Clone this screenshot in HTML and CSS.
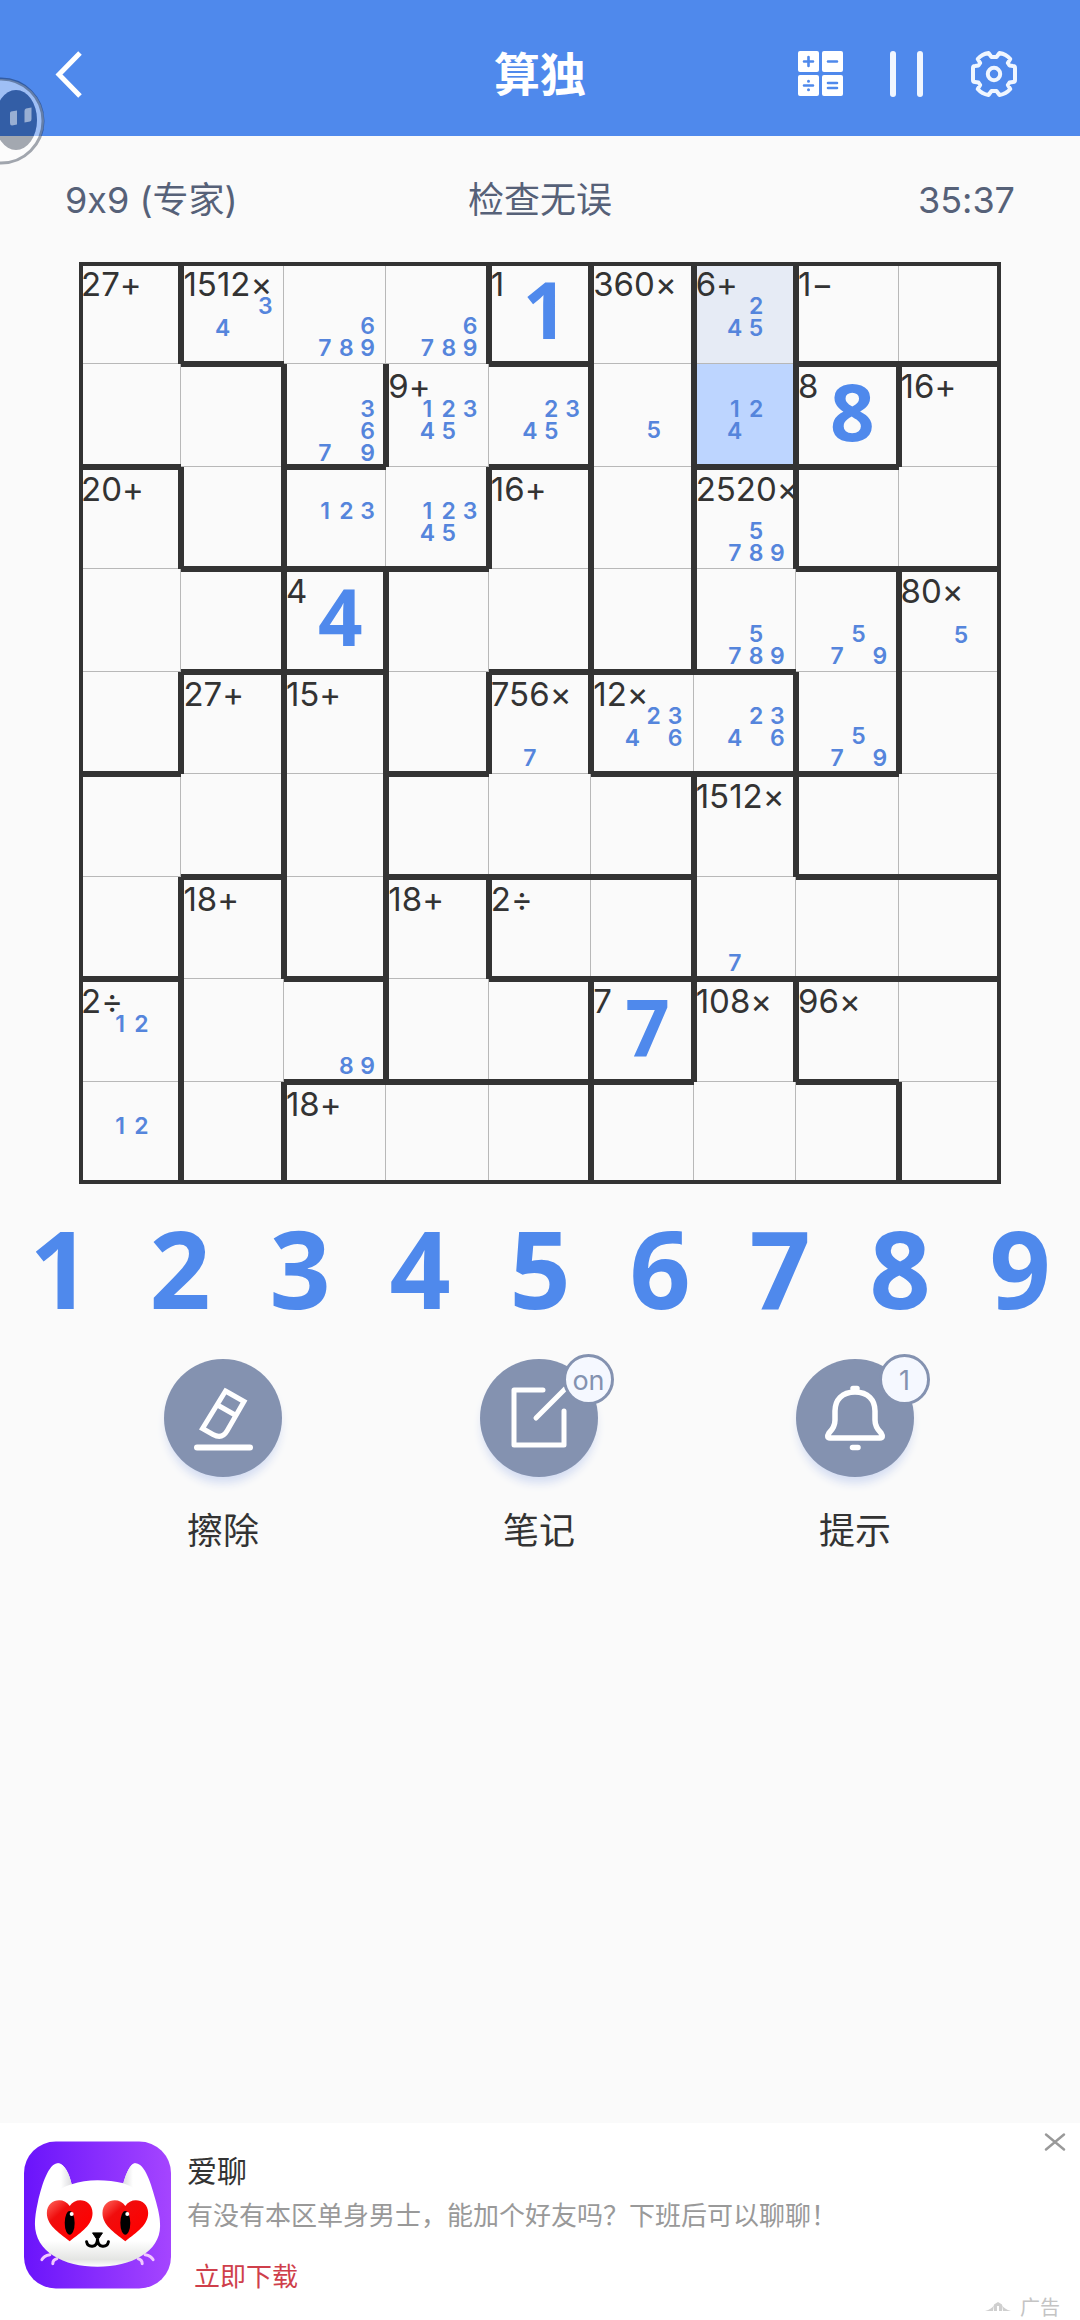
FILE: index.html
```html
<!DOCTYPE html>
<html lang="zh-CN">
<head>
<meta charset="utf-8">
<meta name="viewport" content="width=device-width, initial-scale=1">
<title>算独</title>
<link rel="stylesheet" href="styles.css">
</head>
<body>
<header class="topbar">
  <button class="icon-btn back" type="button" aria-label="返回">
    <svg width="48" height="48" viewBox="0 0 48 48" fill="none" stroke="#fff" stroke-width="5"><path d="M34 3 13 24.500 34 46"/></svg>
  </button>
  <h1 class="title">算独</h1>
  <div class="actions">
    <button class="icon-btn" type="button" aria-label="计算器">
      <svg width="46" height="46" viewBox="0 0 46 46"><g fill="#fff"><rect x="0" y="0" width="21" height="21" rx="2"/><rect x="24" y="0" width="21" height="21" rx="2"/><rect x="0" y="24" width="21" height="21" rx="2"/><rect x="24" y="24" width="21" height="21" rx="2"/></g><g stroke="#4f89ec" stroke-width="2.600" stroke-linecap="round"><path d="M6 10.500h9M10.500 6v9M30 10.500h9M6 34.500h9M30 32h9M30 37h9"/><path d="M10.500 30.200v.1M10.500 38.700v.1" stroke-width="3"/></g></svg>
    </button>
    <button class="icon-btn" type="button" aria-label="暂停">
      <svg width="34" height="46" viewBox="0 0 34 46" fill="#f0f6ff"><rect x="0" y="0" width="6" height="46" rx="3"/><rect x="27" y="0" width="6" height="46" rx="3"/></svg>
    </button>
    <button class="icon-btn" type="button" aria-label="设置">
      <svg width="48" height="48" viewBox="-24 -24 48 48" fill="none" stroke="#f0f6ff" stroke-width="4" stroke-linejoin="round"><path d="M19 -8Q21 -8 21 -6V6Q21 8 19 8L15.500 8.500 13.800 11 16.300 15Q12 20 5.500 21L2.500 17H-2.500L-5.500 21Q-12 20 -16.300 15L-13.800 11 -15.500 8.500 -19 8Q-21 8 -21 6V-6Q-21 -8 -19 -8L-15.500 -8.500 -13.800 -11 -16.300 -15Q-12 -20 -5.500 -21L-2.500 -17H2.500L5.500 -21Q12 -20 16.300 -15L13.800 -11 15.500 -8.500Z"/><circle r="6.200"/></svg>
    </button>
  </div>
</header>

<div class="assist" aria-hidden="true">
  <svg width="46" height="90" viewBox="0 0 46 90"><path fill="#fff" fill-opacity=".46" fill-rule="evenodd" d="M2 3a42 42 0 0 1 0 84H-10V3ZM16 14a21 30 0 0 0 0 60a21 30 0 0 0 0-60Z"/><ellipse cx="16" cy="44" rx="21" ry="30" fill="#000e25" fill-opacity=".35"/><circle cx="1" cy="45" r="42" fill="none" stroke="#000e25" stroke-opacity=".36" stroke-width="3"/><path fill="#fff" fill-opacity=".5" d="M11 35.500Q10 36 10 37V47Q10 49.500 12 49.500L17 48.500V34.500ZM26 32.500Q24.500 33 24.500 35V46.500L30 45.500Q31.500 45 31.500 43V31.500Z"/></svg>
</div>

<main class="game">
  <div class="status">
    <span>9x9 (专家)</span>
    <span>检查无误</span>
    <time class="clock">35:37</time>
  </div>

  <div class="board">
    <button class="cell r"><span class="clue">27+</span></button>
    <button class="cell b"><span class="clue">1512×</span><span class="notes"><i class="n3">3</i><i class="n4">4</i></span></button>
    <button class="cell"><span class="notes"><i class="n6">6</i><i class="n7">7</i><i class="n8">8</i><i class="n9">9</i></span></button>
    <button class="cell r"><span class="notes"><i class="n6">6</i><i class="n7">7</i><i class="n8">8</i><i class="n9">9</i></span></button>
    <button class="cell r b"><span class="clue">1</span><span class="value">1</span></button>
    <button class="cell r"><span class="clue">360×</span></button>
    <button class="cell r same-cage"><span class="clue">6+</span><span class="notes"><i class="n2">2</i><i class="n4">4</i><i class="n5">5</i></span></button>
    <button class="cell b"><span class="clue">1−</span></button>
    <button class="cell b"></button>

    <button class="cell b"></button>
    <button class="cell r"></button>
    <button class="cell r b"><span class="notes"><i class="n3">3</i><i class="n6">6</i><i class="n7">7</i><i class="n9">9</i></span></button>
    <button class="cell"><span class="clue">9+</span><span class="notes"><i class="n1">1</i><i class="n2">2</i><i class="n3">3</i><i class="n4">4</i><i class="n5">5</i></span></button>
    <button class="cell r b"><span class="notes"><i class="n2">2</i><i class="n3">3</i><i class="n4">4</i><i class="n5">5</i></span></button>
    <button class="cell r"><span class="notes"><i class="n5">5</i></span></button>
    <button class="cell r b selected"><span class="notes"><i class="n1">1</i><i class="n2">2</i><i class="n4">4</i></span></button>
    <button class="cell r b"><span class="clue">8</span><span class="value">8</span></button>
    <button class="cell"><span class="clue">16+</span></button>

    <button class="cell r"><span class="clue">20+</span></button>
    <button class="cell r b"></button>
    <button class="cell b"><span class="notes"><i class="n1">1</i><i class="n2">2</i><i class="n3">3</i></span></button>
    <button class="cell r b"><span class="notes"><i class="n1">1</i><i class="n2">2</i><i class="n3">3</i><i class="n4">4</i><i class="n5">5</i></span></button>
    <button class="cell r"><span class="clue">16+</span></button>
    <button class="cell r"></button>
    <button class="cell r"><span class="clue">2520×</span><span class="notes"><i class="n5">5</i><i class="n7">7</i><i class="n8">8</i><i class="n9">9</i></span></button>
    <button class="cell b"></button>
    <button class="cell b"></button>

    <button class="cell"></button>
    <button class="cell r b"></button>
    <button class="cell r b"><span class="clue">4</span><span class="value">4</span></button>
    <button class="cell"></button>
    <button class="cell r b"></button>
    <button class="cell r b"></button>
    <button class="cell b"><span class="notes"><i class="n5">5</i><i class="n7">7</i><i class="n8">8</i><i class="n9">9</i></span></button>
    <button class="cell r"><span class="notes"><i class="n5">5</i><i class="n7">7</i><i class="n9">9</i></span></button>
    <button class="cell"><span class="clue">80×</span><span class="notes"><i class="n5">5</i></span></button>

    <button class="cell r b"></button>
    <button class="cell r"><span class="clue">27+</span></button>
    <button class="cell r"><span class="clue">15+</span></button>
    <button class="cell r b"></button>
    <button class="cell r"><span class="clue">756×</span><span class="notes"><i class="n7">7</i></span></button>
    <button class="cell b"><span class="clue">12×</span><span class="notes"><i class="n2">2</i><i class="n3">3</i><i class="n4">4</i><i class="n6">6</i></span></button>
    <button class="cell r b"><span class="notes"><i class="n2">2</i><i class="n3">3</i><i class="n4">4</i><i class="n6">6</i></span></button>
    <button class="cell r b"><span class="notes"><i class="n5">5</i><i class="n7">7</i><i class="n9">9</i></span></button>
    <button class="cell"></button>

    <button class="cell"></button>
    <button class="cell r b"></button>
    <button class="cell r"></button>
    <button class="cell b"></button>
    <button class="cell b"></button>
    <button class="cell r b"></button>
    <button class="cell r"><span class="clue">1512×</span></button>
    <button class="cell b"></button>
    <button class="cell b"></button>

    <button class="cell r b"></button>
    <button class="cell r"><span class="clue">18+</span></button>
    <button class="cell r b"></button>
    <button class="cell r"><span class="clue">18+</span></button>
    <button class="cell b"><span class="clue">2÷</span></button>
    <button class="cell r b"></button>
    <button class="cell b"><span class="notes"><i class="n7">7</i></span></button>
    <button class="cell b"></button>
    <button class="cell b"></button>

    <button class="cell r"><span class="clue">2÷</span><span class="notes"><i class="n1">1</i><i class="n2">2</i></span></button>
    <button class="cell"></button>
    <button class="cell r b"><span class="notes"><i class="n8">8</i><i class="n9">9</i></span></button>
    <button class="cell b"></button>
    <button class="cell r b"></button>
    <button class="cell r b"><span class="clue">7</span><span class="value">7</span></button>
    <button class="cell r"><span class="clue">108×</span></button>
    <button class="cell b"><span class="clue">96×</span></button>
    <button class="cell"></button>

    <button class="cell r"><span class="notes"><i class="n1">1</i><i class="n2">2</i></span></button>
    <button class="cell r"></button>
    <button class="cell"><span class="clue">18+</span></button>
    <button class="cell"></button>
    <button class="cell r"></button>
    <button class="cell"></button>
    <button class="cell"></button>
    <button class="cell r"></button>
    <button class="cell"></button>
  </div>

  <div class="keypad">
    <button type="button">1</button>
    <button type="button">2</button>
    <button type="button">3</button>
    <button type="button">4</button>
    <button type="button">5</button>
    <button type="button">6</button>
    <button type="button">7</button>
    <button type="button">8</button>
    <button type="button">9</button>
  </div>

  <div class="tools">
    <button class="tool" type="button">
      <span class="disc">
        <svg width="118" height="118" viewBox="0 0 118 118" fill="none" stroke="#fff" stroke-width="5"><path d="M61.500 32 80 42.500 63 72Q58 80.500 49 75.500L38.500 69.500ZM53.500 46 72 56.500"/><path d="M33 88.500H86" stroke-width="6" stroke-linecap="round"/></svg>
      </span>
      <span class="label">擦除</span>
    </button>
    <button class="tool" type="button">
      <span class="disc">
        <svg width="118" height="118" viewBox="0 0 118 118" fill="none" stroke="#fff" stroke-width="5" stroke-linecap="round" stroke-linejoin="round"><path d="M63 31H34V86H84V52M56 59 86 29"/></svg>
        <span class="badge">on</span>
      </span>
      <span class="label">笔记</span>
    </button>
    <button class="tool" type="button">
      <span class="disc">
        <svg width="118" height="118" viewBox="0 0 118 118" fill="none" stroke="#fff" stroke-width="5.500" stroke-linecap="round" stroke-linejoin="round"><path d="M59 33C46 33 39 41 39 52V61C39 67 36 71 33 74Q30 79 34 79H84Q88 79 85 74C82 71 79 67 79 61V52C79 41 72 33 59 33Z"/><path d="M57 29.500H61M56.500 88.500H62"/></svg>
        <span class="badge">1</span>
      </span>
      <span class="label">提示</span>
    </button>
  </div>
</main>

<aside class="ad">
  <svg class="ad-logo" width="147" height="148" viewBox="0 0 148 148" aria-hidden="true">
    <defs>
      <linearGradient id="purple"><stop offset="0" stop-color="#6a14fb"/><stop offset="1" stop-color="#a545ff"/></linearGradient>
      <linearGradient id="fur" x2="0" y2="1"><stop offset=".75" stop-color="#fff"/><stop offset=".93" stop-color="#e4e5e3"/><stop offset="1" stop-color="#fff"/></linearGradient>
      <linearGradient id="earL"><stop offset=".4" stop-color="#fff"/><stop offset="1" stop-color="#dcdcdf"/></linearGradient>
      <linearGradient id="earR"><stop offset="0" stop-color="#dcdcdf"/><stop offset=".6" stop-color="#fff"/></linearGradient>
      <linearGradient id="heart" x2="1" y2="1"><stop offset="0" stop-color="#ff6a60"/><stop offset=".3" stop-color="#f00d0d"/><stop offset=".8" stop-color="#f00"/><stop offset="1" stop-color="#a80000"/></linearGradient>
      <path id="heart-shape" d="M0 41.500C-12 32-23 25-23 13C-23-1-6-4 0 6C6-4 23-1 23 13C23 25 12 32 0 41.500Z"/>
    </defs>
    <rect width="148" height="148" rx="32" fill="url(#purple)"/>
    <g stroke="#f1c8ff" stroke-width="3" fill="none" stroke-linecap="round"><path d="M18 119Q20 115 26 114M29 123Q29 119 33 118M130 119Q128 115 122 114M119 123Q119 119 115 118"/></g>
    <path fill="url(#fur)" d="M74 39Q88 39 100 42C103 32 107 22 112 22C122 22 128 43 133 61C136 72 137 78 137 85C137 111 108 126 74 126S11 111 11 83C11 77 12 70 14 61C18 43 25 22 34 22C41 22 46 34 48 43Q60 39 74 39Z"/>
    <path fill="url(#earL)" d="M34 22C41 22 46 34 48 43Q40 45 34 50Q26 40 34 22Z"/>
    <path fill="url(#earR)" d="M112 22C107 22 103 32 100 42Q106 44 112 48Q120 36 112 22Z"/>
    <use href="#heart-shape" x="46" y="59" fill="url(#heart)"/>
    <use href="#heart-shape" x="102" y="59" fill="url(#heart)"/>
    <ellipse cx="46" cy="82" rx="5" ry="12"/><ellipse cx="102" cy="82" rx="5" ry="12"/>
    <circle cx="48" cy="73" r="2" fill="#fff"/><circle cx="104" cy="73" r="2" fill="#fff"/>
    <path d="M69 92H79L75 98H73Z" stroke="#000" stroke-linejoin="round"/>
    <path d="M63 101Q64 106 69 105.500Q74 105 74 98Q74 105 79 105.500Q84 106 85 101" fill="none" stroke="#000" stroke-width="3" stroke-linecap="round"/>
  </svg>
  <div class="ad-copy">
    <strong class="ad-title">爱聊</strong>
    <p class="ad-text">有没有本区单身男士，能加个好友吗？下班后可以聊聊！</p>
    <a class="ad-link" href="#">立即下载</a>
  </div>
  <div class="ad-side">
    <button class="icon-btn" type="button" aria-label="关闭广告">
      <svg width="22" height="18" viewBox="0 0 22 18" stroke="#999" stroke-width="2.400" stroke-linecap="round"><path d="M2 1.500 20 16.500M20 1.500 2 16.500"/></svg>
    </button>
    <span class="ad-mark"><svg width="26" height="12" viewBox="0 0 26 12" fill="#cfcfcf" aria-hidden="true"><path d="M0 9Q7 7 9 3L8 9ZM9 2.500 13 0 17 2.500V9H14V4H12V9H9ZM17 3Q19 7 26 9H18Z"/></svg>广告</span>
  </div>
</aside>
</body>
</html>
```
FILE: styles.css
```css
* {
  box-sizing: border-box;
}

:root {
  --blue: #4f89ec;
  --ink: #333;
  --slate: #8492b0;
  --digits: "Noto Sans", "Open Sans", sans-serif;
}

body {
  margin: 0;
  min-height: 100vh;
  display: flex;
  flex-direction: column;
  background: #fafafa;
  color: var(--ink);
  font-family: Inter, "Noto Sans CJK SC", sans-serif;
  font-feature-settings: "calt" 0;
}

button {
  margin: 0;
  padding: 0;
  border: 0;
  background: none;
  color: inherit;
  font: inherit;
  cursor: pointer;
}

svg {
  display: block;
}

/* Top bar */
.topbar {
  display: grid;
  grid-template-columns: 1fr auto 1fr;
  align-items: center;
  height: 136px;
  padding: 11px 62px 0 46px;
  background: var(--blue);
  color: #fff;
}

.back {
  justify-self: start;
}

.title {
  margin: 0;
  padding-left: 16px;
  font-size: 46px;
  line-height: 64px;
  font-weight: 700;
}

.actions {
  display: flex;
  justify-content: flex-end;
  align-items: center;
  gap: 46px;
}

/* Floating assistant, docked on the left edge */
.assist {
  position: absolute;
  left: 0;
  top: 76px;
}

/* Status line */
.status {
  display: grid;
  grid-template-columns: 1fr auto 1fr;
  padding: 40px 65px 38px;
  color: #566178;
  font-size: 36px;
  line-height: 48px;
}

.clock {
  text-align: right;
}

/* Board */
.board {
  position: relative;
  display: grid;
  grid-template-columns: repeat(9, 1fr);
  margin: 0 79px;
}

.board::after {
  content: "";
  position: absolute;
  inset: 0;
  border: 4px solid var(--ink);
  pointer-events: none;
}

.cell {
  position: relative;
  display: grid;
  grid-template-columns: 100%;
  grid-template-rows: 100%;
  aspect-ratio: 1;
  min-width: 0;
  border: solid #b8b8b8;
  border-width: 0 1px 1px 0;
}

.same-cage {
  background: #e6ebf5;
}

.selected {
  background: #bdd5ff;
}

/* Cage walls straddle the line between two cells */
.cell.r::before,
.cell.b::after {
  content: "";
  position: absolute;
  z-index: 1;
  background: var(--ink);
}

.cell.r::before {
  top: 0;
  right: -4px;
  bottom: -1px;
  width: 6px;
}

.cell.b::after {
  left: 0;
  right: -1px;
  bottom: -4px;
  height: 6px;
}

.clue,
.notes,
.value {
  grid-area: 1 / 1;
}

.clue {
  place-self: start;
  z-index: 2;
  padding: 1px 0 0 2px;
  font-size: 33px;
  line-height: 42px;
  white-space: nowrap;
}

.notes {
  place-self: end;
  display: grid;
  grid-template-columns: repeat(3, 1fr);
  grid-template-rows: repeat(3, 1fr);
  width: 64px;
  height: 64px;
  margin: 0 7px 4px 0;
  color: #5585dc;
  font-size: 23px;
  line-height: 22px;
  font-weight: 600;
}

.notes i {
  font-style: normal;
}

.n1 { grid-area: 1 / 1; }
.n2 { grid-area: 1 / 2; }
.n3 { grid-area: 1 / 3; }
.n4 { grid-area: 2 / 1; }
.n5 { grid-area: 2 / 2; }
.n6 { grid-area: 2 / 3; }
.n7 { grid-area: 3 / 1; }
.n8 { grid-area: 3 / 2; }
.n9 { grid-area: 3 / 3; }

.value {
  place-self: center start;
  padding: 0 0 8px 34px;
  color: var(--blue);
  font-family: var(--digits);
  font-size: 78px;
  line-height: 88px;
  font-weight: 700;
}

/* Number keys */
.keypad {
  display: grid;
  grid-template-columns: repeat(9, 1fr);
  margin-top: 20px;
  color: var(--blue);
  font-family: var(--digits);
  font-size: 107px;
  line-height: 128px;
  font-weight: 700;
}

/* Tools */
.tools {
  display: grid;
  grid-template-columns: repeat(3, 1fr);
  padding: 27px 67px 0 65px;
}

.tool {
  display: flex;
  flex-direction: column;
  align-items: center;
  gap: 30px;
}

.disc {
  position: relative;
  border-radius: 50%;
  background: var(--slate);
  box-shadow: 0 8px 10px -2px #d3dcf2;
}

.badge {
  position: absolute;
  top: -5px;
  right: -16px;
  width: 51px;
  height: 51px;
  border: 3px solid var(--slate);
  border-radius: 50%;
  background: #f5f8ff;
  color: var(--slate);
  font-size: 27px;
  line-height: 48px;
}

.label {
  font-size: 36px;
  line-height: 48px;
}

/* Advert */
.ad {
  display: flex;
  gap: 16px;
  margin-top: auto;
  padding: 18px 14px 0 24px;
  height: 197px;
  background: #fff;
}

.ad-copy {
  flex: 1;
  display: flex;
  flex-direction: column;
  align-items: flex-start;
}

.ad-title {
  padding-top: 8px;
  font-size: 30px;
  line-height: 44px;
  font-weight: 400;
}

.ad-text {
  margin: 3px 0 21px;
  color: #999;
  font-size: 26px;
  line-height: 40px;
}

.ad-link {
  padding-left: 7px;
  color: #cf3f4b;
  font-size: 26px;
  line-height: 40px;
  text-decoration: none;
}

.ad-side {
  display: flex;
  flex-direction: column;
  justify-content: space-between;
  align-items: flex-end;
  margin-top: -8px;
}

.ad-mark {
  display: flex;
  align-items: center;
  gap: 9px;
  padding-right: 6px;
  color: #c4c4c4;
  font-size: 20px;
  line-height: 24px;
}
```
